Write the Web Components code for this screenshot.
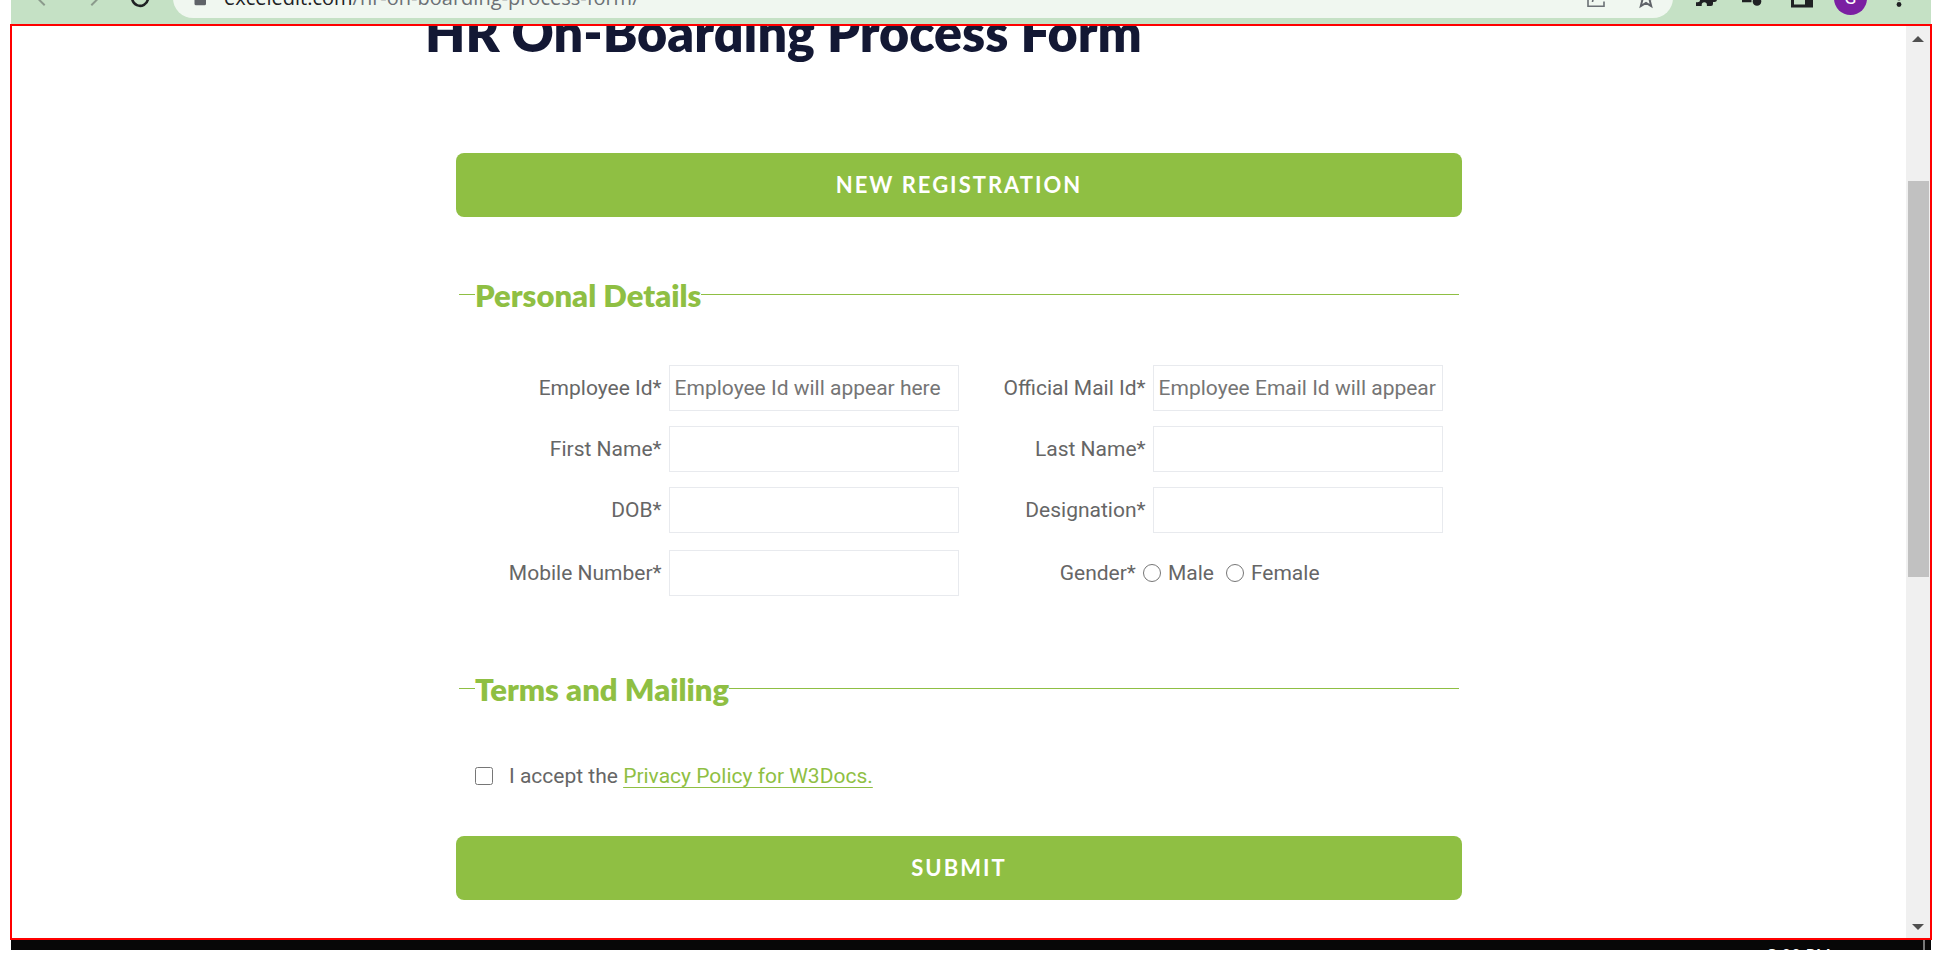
<!DOCTYPE html>
<html lang="en">
<head>
<meta charset="utf-8">
<title>HR On-Boarding Process Form</title>
<style>
html, body { margin: 0; height: 100%; background: #fff; }
body { font: 21px/30px Roboto, "Liberation Sans", sans-serif; color: #666; overflow: hidden; }
</style>
</head>
<body>
<browser-window>
  <browser-toolbar slot="toolbar"></browser-toolbar>
  <onboarding-page></onboarding-page>
  <task-bar slot="taskbar"></task-bar>
</browser-window>

<script>
const define = (name, html, setup) => {
  const template = document.createElement('template');
  template.innerHTML = html;
  customElements.define(name, class extends HTMLElement {
    constructor() {
      super();
      this.attachShadow({ mode: 'open' }).append(template.content.cloneNode(true));
    }
    connectedCallback() { if (setup) setup(this, this.shadowRoot); }
  });
};

define('browser-toolbar', `
<style>
:host { display: flex; align-items: flex-end; height: 24px; margin-right: 1px; overflow: hidden; background: #c5e1c5; }
.row { flex: 1; display: flex; align-items: center; height: 52px; padding: 0 20px 0 21px; }
.nav { display: flex; gap: 24px; }
.actions { display: flex; align-items: center; gap: 20px; }
button { display: block; padding: 0; border: 0; background: none; }
svg { display: block; }
.address { flex: 1; display: flex; align-items: center; height: 40px; margin: 0 21px; padding: 0 15px; border-radius: 20px; background: #f0f7f0; }
.url { flex: 1; margin-left: 12px; font: 20px/28px "Open Sans", "Noto Sans", sans-serif; color: #6b7075; }
.url b { font-weight: 400; color: #202124; }
.tools { display: flex; gap: 26px; }
.avatar { width: 33px; height: 33px; border-radius: 50%; background: #7b1fa2; color: #fff; font: 18px/32px Roboto, sans-serif; text-align: center; }
</style>
<div class="row">
  <div class="nav">
    <button aria-label="Back"><svg width="24" height="24" viewBox="0 0 24 24"><path fill="#8b9a8c" d="M20 11H7.8l5.6-5.6L12 4l-8 8 8 8 1.4-1.4L7.8 13H20z"/></svg></button>
    <button aria-label="Forward"><svg width="24" height="24" viewBox="0 0 24 24"><path fill="#8b9a8c" d="M4 11h12.2l-5.6-5.6L12 4l8 8-8 8-1.4-1.4 5.6-5.6H4z"/></svg></button>
    <button aria-label="Reload"><svg width="24" height="24" viewBox="0 0 24 24"><path fill="none" stroke="#202124" stroke-width="2.6" d="M18.500 7A8 8 0 1 0 20 13"/><path fill="#202124" d="M20 3v7h-7z"/></svg></button>
  </div>
  <div class="address">
    <svg width="24" height="24" viewBox="0 0 24 24"><path fill="none" stroke="#5f6368" stroke-width="2" d="M9 9V6a3 3 0 0 1 6 0v3"/><rect x="6.500" y="8" width="11.500" height="11.300" rx="1.500" fill="#5f6368"/></svg>
    <span class="url"><b>exceledit.com</b>/hr-on-boarding-process-form/</span>
    <div class="tools">
      <button aria-label="Share"><svg width="24" height="24" viewBox="0 0 24 24"><path fill="none" stroke="#6b7075" stroke-width="1.600" d="M9 5H4v15.200h16V15.500M8.500 16c.5-4.500 3-7 8-7M14 5l5 4-5 4"/></svg></button>
      <button aria-label="Bookmark"><svg width="24" height="24" viewBox="0 0 24 24"><path fill="none" stroke="#5f6368" stroke-width="2" stroke-linejoin="miter" d="M12 4l2.300 5.800 6 .5-4.600 3.900 1.500 5.800L12 16.800 6.800 20l1.500-5.800-4.600-3.900 6-.5z"/></svg></button>
    </div>
  </div>
  <div class="actions">
    <button aria-label="Extensions"><svg width="24" height="24" viewBox="0 0 24 24"><path fill="#202124" d="M20.500 11H19V7a2 2 0 0 0-2-2h-4V3.500a2.500 2.500 0 0 0-5 0V5H4a2 2 0 0 0-2 2v3.800h1.500a2.700 2.700 0 0 1 0 5.400H2V20h5.700v-1.200a2.600 2.600 0 0 1 5.200 0V20H17a2 2 0 0 0 2-2v-2h1.500a2.500 2.500 0 0 0 0-5z"/></svg></button>
    <button aria-label="Media"><svg width="28" height="24" viewBox="0 0 28 24"><path fill="#202124" d="M4 4h13v3H4zM4 9h13v3H4zM4 13.500h9.500v2.700H4zM19 4h6v3h-3v8.500h-3z"/><circle cx="19" cy="15.500" r="4.300" fill="#202124"/></svg></button>
    <button aria-label="Side panel"><svg width="28" height="24" viewBox="0 0 28 24"><path fill="#202124" fill-rule="evenodd" d="M5 4h22v17.500H5zM8 8v10.500h11V8z"/></svg></button>
    <button class="avatar" aria-label="Profile">G</button>
    <button aria-label="Menu"><svg width="24" height="24" viewBox="0 0 24 24"><g fill="#202124"><circle cx="12" cy="5" r="2.400"/><circle cx="12" cy="12" r="2.400"/><circle cx="12" cy="18.500" r="2.400"/></g></svg></button>
  </div>
</div>`);

define('scroll-bar', `
<style>
:host { display: flex; flex-direction: column; align-items: center; width: 24px; background: #f0f0f0; }
button { display: grid; place-items: center; width: 24px; height: 26px; padding: 0; border: 0; background: none; }
.down { height: 22px; }
.before { flex: 129; }
.thumb { flex: 396; width: 21px; background: #c1c1c1; }
.after { flex: 339; }
</style>
<button aria-label="Scroll up"><svg width="12" height="6"><path fill="#505050" d="M6 0l6 6H0z"/></svg></button>
<div class="before"></div><div class="thumb"></div><div class="after"></div>
<button class="down" aria-label="Scroll down"><svg width="12" height="6"><path fill="#505050" d="M0 0h12L6 6z"/></svg></button>`);

define('task-bar', `
<style>
:host { display: flex; justify-content: flex-end; height: 10px; margin: 0 1px; overflow: hidden; background: #070707; }
time { margin-top: 3px; font: 17px/24px "Open Sans", sans-serif; color: #fff; }
i { width: 2px; margin: 0 6px 0 92px; background: #777; }
</style>
<time>3:00 PM</time><i></i>`);

define('browser-window', `
<style>
:host { display: flex; flex-direction: column; box-sizing: border-box; height: 100vh; padding: 0 10px 14px; }
::slotted([slot=toolbar]) { margin-left: 1px; }
main { flex: 1; min-height: 0; display: flex; border: 2px solid #f00; overflow: hidden; }
.content { flex: 1; min-width: 0; overflow: hidden; }
</style>
<slot name="toolbar"></slot>
<main><div class="content"><slot></slot></div><scroll-bar></scroll-bar></main>
<slot name="taskbar"></slot>`);

define('action-button', `
<style>
:host { display: block; }
button { display: block; width: 100%; height: 64px; padding: 0; border: 0; border-radius: 8px; background: #8fbf43; color: #fff; font: 700 22px/30px Lato, sans-serif; letter-spacing: 2px; text-transform: uppercase; }
</style>
<button type="button"><slot></slot></button>`);

define('form-section', `
<style>
:host { display: block; margin: 0 3px; }
fieldset { min-width: 0; margin: 0; padding: 51px 16px 0; border: 0; border-top: 1px solid #8fbf43; }
legend { padding: 2px 0 0; font: 800 31px/37px Lato, sans-serif; color: #8fbf43; }
</style>
<fieldset><legend></legend><slot></slot></fieldset>`,
(host, root) => { root.querySelector('legend').textContent = host.getAttribute('heading'); });

define('text-field', `
<style>
:host { display: grid; grid-template-columns: 40% 60%; align-items: center; }
label { padding-right: 7px; text-align: right; }
input { box-sizing: border-box; width: 100%; height: 46px; padding: 0 5px; border: 1px solid #e8eaee; border-radius: 0; background: #fff; font: inherit; color: inherit; }
input::placeholder { color: #757575; }
</style>
<label for="field"></label><input id="field" type="text">`,
(host, root) => {
  root.querySelector('label').textContent = host.getAttribute('label') + '*';
  root.querySelector('input').placeholder = host.getAttribute('placeholder') || '';
});

define('gender-choice', `
<style>
:host { display: grid; grid-template-columns: 38% 1fr; align-items: center; min-height: 50px; }
.caption { padding-right: 7px; text-align: right; }
.options { display: flex; gap: 12px; }
label { display: flex; align-items: center; gap: 7px; }
input { width: 18px; height: 18px; margin: 0; }
</style>
<span class="caption" id="caption">Gender*</span>
<div class="options" role="radiogroup" aria-labelledby="caption">
  <label><input type="radio" name="gender">Male</label>
  <label><input type="radio" name="gender">Female</label>
</div>`);

define('terms-check', `
<style>
:host { display: flex; align-items: center; height: 34px; }
input { width: 18px; height: 18px; margin: 0 16px 0 0; }
a { color: #8fbf43; text-decoration: underline 1px; text-underline-offset: 4px; text-decoration-skip-ink: none; }
</style>
<input id="accept" type="checkbox"><span><label for="accept">I accept the</label> <a href="#privacy">Privacy Policy for W3Docs.</a></span>`);

define('onboarding-page', `
<style>
:host { display: block; }
h1 { max-width: 1068px; margin: -26px auto 89px; font: 800 52px/64px Lato, sans-serif; color: #131834; }
form { max-width: 1006px; margin: 0 auto; }
.fields { display: grid; grid-template-columns: 1fr 1fr; row-gap: 15px; }
.personal { margin-top: 58px; }
.terms { margin-top: 71px; }
.submit { margin-top: 43px; }
</style>
<h1>HR On-Boarding Process Form</h1>
<form>
  <action-button>New Registration</action-button>
  <form-section class="personal" heading="Personal Details">
    <div class="fields">
      <text-field label="Employee Id" placeholder="Employee Id will appear here"></text-field>
      <text-field label="Official Mail Id" placeholder="Employee Email Id will appear here"></text-field>
      <text-field label="First Name"></text-field>
      <text-field label="Last Name"></text-field>
      <text-field label="DOB"></text-field>
      <text-field label="Designation"></text-field>
      <text-field label="Mobile Number"></text-field>
      <gender-choice></gender-choice>
    </div>
  </form-section>
  <form-section class="terms" heading="Terms and Mailing"><terms-check></terms-check></form-section>
  <action-button class="submit">Submit</action-button>
</form>`);
</script>
</body>
</html>
